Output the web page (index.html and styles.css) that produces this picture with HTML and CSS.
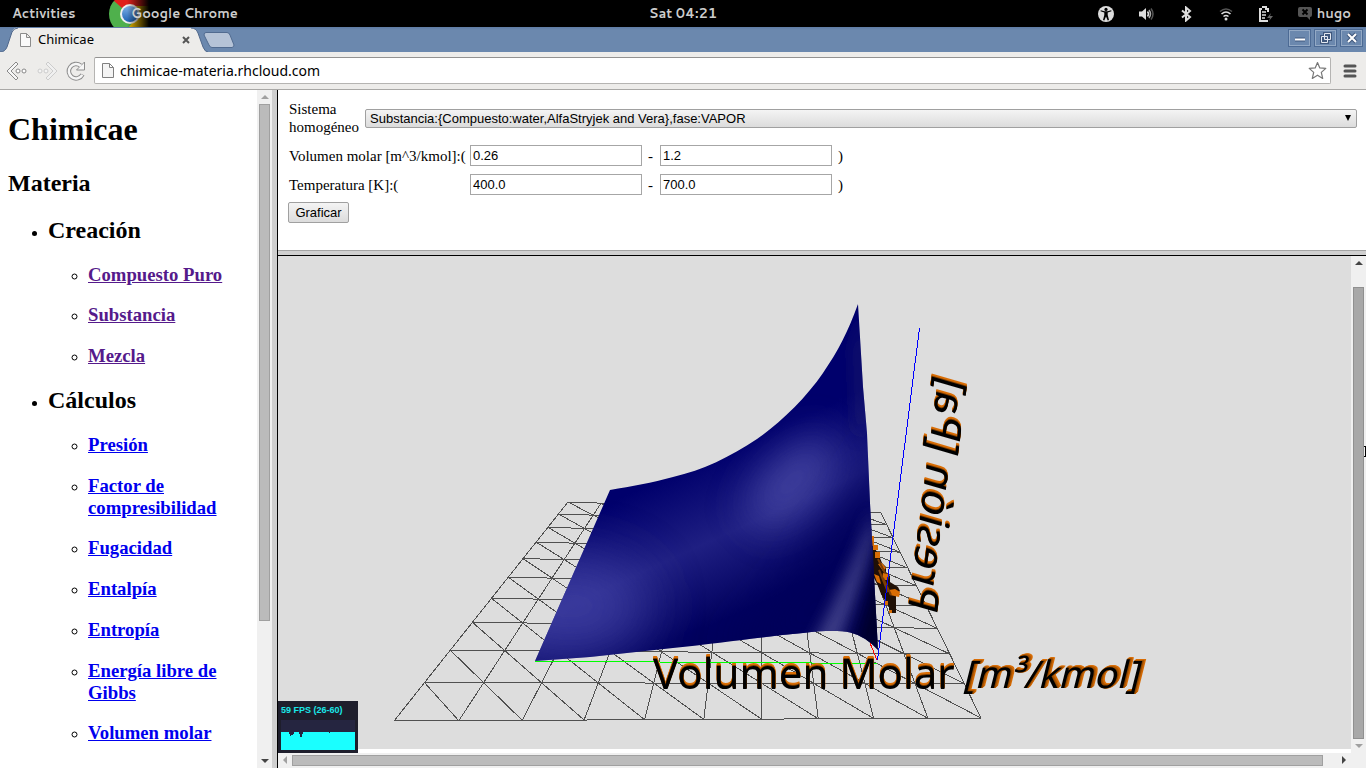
FILE: index.html
```html
<!DOCTYPE html>
<html lang="es">
<head>
<meta charset="utf-8">
<title>Chimicae</title>
<link rel="stylesheet" href="styles.css">
</head>
<body>
<header class="panel">
  <span class="panel-activities">Activities</span>
  <span class="panel-app">
    <svg class="chrome-logo" width="40" height="27" viewBox="0 0 40 27" aria-hidden="true">
      <defs>
        <linearGradient id="fade" x1="0" x2="1"><stop offset="0.45" stop-color="#000" stop-opacity="0"/><stop offset="1" stop-color="#000"/></linearGradient>
        <linearGradient id="lens" x1="0" x2="0" y1="0" y2="1"><stop offset="0" stop-color="#7fb0e8"/><stop offset="1" stop-color="#1f63b5"/></linearGradient>
      </defs>
      <circle cx="20" cy="14" r="20" fill="#4fb04c"/>
      <path d="M20 14 5 1 0 0H40V6H20z" fill="#e0201c"/>
      <path d="M20 6H40V27H20L28 17z" fill="#e8b800"/>
      <path d="M0 0H6L3 2 0 7z"/>
      <circle cx="21" cy="14" r="10" fill="#f0f0f0"/>
      <circle cx="21" cy="14" r="8" fill="url(#lens)"/>
      <rect width="40" height="27" fill="url(#fade)"/>
    </svg>
    <span class="panel-app-name">Google Chrome</span>
  </span>
  <time class="panel-clock">Sat 04:21</time>
  <div class="panel-status">
    <svg width="16" height="16" viewBox="0 0 16 16" aria-hidden="true"><circle cx="8" cy="8" r="8" fill="#ddd"/><circle cx="8" cy="3.4" r="1.6"/><path d="M2.5 5.2 6.3 6.4V9L5 14l1.3.4L8 10.5l1.7 3.9L11 14 9.700 9V6.400l3.800-1.200-.3-1L9.500 5.300h-3L2.800 4.200z"/></svg>
    <svg width="16" height="16" viewBox="0 0 16 16" aria-hidden="true"><path d="M1 5.500h3L8 2v12L4 10.500H1z" fill="#ddd"/><path d="M9.500 5.500q2 2.500 0 5" fill="none" stroke="#ddd" stroke-width="1.500"/><path d="M11 4q3 4 0 8" fill="none" stroke="#aaa" stroke-width="1.500"/><path d="M13 2.500q4 5.500 0 11" fill="none" stroke="#555" stroke-width="1.500"/></svg>
    <svg width="16" height="16" viewBox="0 0 16 16" aria-hidden="true"><path d="M4 4.500 12 11 8 14.500V1.500L12 5 4 11.500" fill="none" stroke="#ddd" stroke-width="2"/></svg>
    <svg width="16" height="16" viewBox="0 0 16 16" aria-hidden="true"><g fill="none" stroke-width="1.600"><path d="M2 5.500q6-5 12 0" stroke="#555"/><path d="M3.500 8q4.500-4 9 0" stroke="#ddd"/><path d="M5.500 10.500q2.500-2 5 0" stroke="#ddd"/></g><circle cx="8" cy="13" r="1.500" fill="#ddd"/></svg>
    <svg width="16" height="16" viewBox="0 0 16 16" aria-hidden="true"><path d="M4 1h4v2h2v3M10 15H2V3h2" fill="none" stroke="#ddd" stroke-width="2"/><path d="M4 6h4M4 9h4M4 12h3" stroke="#ddd" stroke-width="1.500"/><path d="M13 7 9 12h3l-1 3 4-5h-3z" fill="#666"/></svg>
    <span class="panel-user">
      <svg width="14" height="14" viewBox="0 0 14 14" aria-hidden="true"><path d="M2 0h10q2 0 2 2v6q0 2-2 2v3L9 10H2Q0 10 0 8V2Q0 0 2 0z" fill="#555"/><path d="m4.500 2.500 5 5m0-5-5 5" stroke="#000" stroke-width="2"/></svg>
      hugo
    </span>
  </div>
</header>

<div class="tabstrip">
  <div class="tab">
    <svg class="tab-shape" width="208" height="25" viewBox="0 0 208 25" aria-hidden="true"><path d="M0 25Q5 25 7 20L12 5Q14 0 18 1H191Q196 1 198 6L203 20Q205 25 208 25z" fill="#edecea"/><path d="M0 25Q5 25 7 20L12 5Q14 1 18 1M191 1Q196 1 198 6L203 20Q205 25 208 25" fill="none" stroke="#4f678b"/></svg>
    <svg class="tab-icon" width="11" height="14" viewBox="0 0 11 14" aria-hidden="true"><path d="M.5.500h6l4 4v9H.5zM6.500.500v4h4" fill="#fafafa" stroke="#8c8c8c"/></svg>
    <span class="tab-title">Chimicae</span>
    <button class="tab-close" aria-label="Cerrar"><svg width="8" height="8" viewBox="0 0 8 8"><path d="m1 1 6 6m0-6L1 7" stroke="#555" stroke-width="2"/></svg></button>
  </div>
  <button class="tab-new" aria-label="Nueva"><svg width="32" height="16" viewBox="0 0 32 16"><path d="M3 .5H24Q26 .5 27 3l4 10q0 2-2 2.500H9Q7 15.500 6 13L1 3Q1 .5 3 .5z" fill="#b5c3d7" stroke="#516b90"/></svg></button>
  <div class="window-buttons">
    <button aria-label="Minimizar"><svg width="12" height="12" viewBox="0 0 12 12"><path d="M1 7.500h10" stroke="#3f577c" stroke-width="4"/><path d="M1 7.500h10" stroke="#fff" stroke-width="2"/></svg></button>
    <button aria-label="Restaurar"><svg width="12" height="12" viewBox="0 0 12 12" fill="none"><path d="M4.500 1.500h6v6h-6zM1.500 4.500h6v6h-6z" stroke="#3f577c" stroke-width="3"/><path d="M4.500 1.500h6v6h-6zM1.500 4.500h6v6h-6z" stroke="#e4e9f1"/></svg></button>
    <button aria-label="Cerrar ventana"><svg width="12" height="12" viewBox="0 0 12 12"><path d="m2 2 8 8m0-8-8 8" stroke="#3f577c" stroke-width="4"/><path d="m2 2 8 8m0-8-8 8" stroke="#fff" stroke-width="2"/></svg></button>
  </div>
</div>

<nav class="toolbar">
  <button class="tool" aria-label="Atrás"><svg width="22" height="20" viewBox="0 0 22 20"><path d="M10 1 1 10l9 9 2-2-7-7 7-7z" fill="#f6f6f6" stroke="#888"/><circle cx="12" cy="10" r="2" fill="#fff" stroke="#888"/><circle cx="18" cy="10" r="2" fill="#fff" stroke="#888"/></svg></button>
  <button class="tool" aria-label="Adelante"><svg width="22" height="20" viewBox="0 0 22 20"><path d="m12 1 9 9-9 9-2-2 7-7-7-7z" fill="#f0f0f0" stroke="#ccc"/><circle cx="10" cy="10" r="2" fill="#f4f4f4" stroke="#ccc"/><circle cx="4" cy="10" r="2" fill="#f4f4f4" stroke="#ccc"/></svg></button>
  <button class="tool" aria-label="Recargar"><svg width="20" height="20" viewBox="0 0 20 20"><path d="M14.500 4.500A7.200 7.200 0 1 0 16.500 13.500" fill="none" stroke="#8d8d8d" stroke-width="4.500"/><path d="M18.500 1v8h-8z" fill="#f6f6f6" stroke="#8d8d8d"/><path d="M15 5A7.200 7.200 0 1 0 16.300 13.800" fill="none" stroke="#f6f6f6" stroke-width="2.500"/></svg></button>
  <div class="omnibox">
    <svg width="12" height="15" viewBox="0 0 12 15" aria-hidden="true"><path d="M.5.500h7l4 4v10H.5zM7.500.500v4h4" fill="#f4f4f4" stroke="#808080"/></svg>
    <input class="omnibox-url" type="text" aria-label="Dirección" value="chimicae-materia.rhcloud.com">
    <svg width="19" height="19" viewBox="0 0 19 19" aria-hidden="true"><path d="m9.500 1.500 2.300 5.400 6 .5-4.500 4 1.400 6-5.200-3.200-5.200 3.200 1.400-6-4.500-4 6-.5z" fill="#fff" stroke="#777" stroke-width="1.200" stroke-linejoin="round"/></svg>
  </div>
  <button class="menu" aria-label="Menú"><svg width="14" height="14" viewBox="0 0 14 14"><path d="M2 2h10M2 7h10M2 12h10" stroke="#555" stroke-width="3" stroke-linecap="round"/></svg></button>
</nav>

<div class="frames">
  <aside class="sidebar">
    <div class="sidebar-page">
      <h1>Chimicae</h1>
      <h2>Materia</h2>
      <ul>
        <li><h2>Creación</h2>
          <ul>
            <li><h3><a class="visited" href="#compuesto">Compuesto Puro</a></h3></li>
            <li><h3><a class="visited" href="#substancia">Substancia</a></h3></li>
            <li><h3><a class="visited" href="#mezcla">Mezcla</a></h3></li>
          </ul>
        </li>
        <li><h2>Cálculos</h2>
          <ul>
            <li><h3><a href="#presion">Presión</a></h3></li>
            <li><h3><a href="#factor">Factor de compresibilidad</a></h3></li>
            <li><h3><a href="#fugacidad">Fugacidad</a></h3></li>
            <li><h3><a href="#entalpia">Entalpía</a></h3></li>
            <li><h3><a href="#entropia">Entropía</a></h3></li>
            <li><h3><a href="#gibbs">Energía libre de Gibbs</a></h3></li>
            <li><h3><a href="#volumen">Volumen molar</a></h3></li>
          </ul>
        </li>
      </ul>
    </div>
    <div class="vscroll" aria-hidden="true">
      <span class="arrow arrow-up off"></span>
      <span class="track"><span class="thumb thumb-side"></span></span>
      <span class="arrow arrow-down"></span>
    </div>
  </aside>

  <main class="main">
    <form class="controls">
      <div class="system">
        <label for="sistema">Sistema homogéneo</label>
        <div class="select-box">
          <select id="sistema"><option>Substancia:{Compuesto:water,AlfaStryjek and Vera},fase:VAPOR</option></select>
        </div>
      </div>
      <div class="ranges">
        <label for="vol-min">Volumen molar [m^3/kmol]:(</label>
        <input id="vol-min" type="text" value="0.26"><span>-</span>
        <input aria-label="Volumen molar máximo" type="text" value="1.2"><span>)</span>
        <label for="temp-min">Temperatura [K]:(</label>
        <input id="temp-min" type="text" value="400.0"><span>-</span>
        <input aria-label="Temperatura máxima" type="text" value="700.0"><span>)</span>
      </div>
      <button class="submit" type="button">Graficar</button>
    </form>

    <section class="viewer">
      <div class="plot">
        <svg class="scene" viewBox="278 256 1073 493" preserveAspectRatio="xMidYMid slice">
          <defs>
            <clipPath id="sheet"><path d="M610 490C632 486 652 483 673 477C703 470 730 457 757 439C779 424 806 398 823 373C838 351 848 332 858 304L863 387 867 433 870 503 873 557 878 650Q865 636 850 632.500Q835 629 803 633C760 637 720 643 673 648L590 657 535 661z"/></clipPath>
            <linearGradient id="base" gradientUnits="userSpaceOnUse" x1="670" y1="475" x2="750" y2="650">
              <stop offset="0" stop-color="#00006c"/><stop offset=".4" stop-color="#1f1f82"/><stop offset=".8" stop-color="#00005e"/><stop offset="1" stop-color="#000058"/>
            </linearGradient>
            <filter id="soft" x="-80%" y="-80%" width="260%" height="260%"><feGaussianBlur stdDeviation="8"/></filter>
            <filter id="softer" x="-120%" y="-120%" width="340%" height="340%"><feGaussianBlur stdDeviation="20"/></filter>
            <filter id="softest" x="-120%" y="-120%" width="340%" height="340%"><feGaussianBlur stdDeviation="28"/></filter>
          </defs>
          <path id="grid" class="grid"/>
          <g class="edge-label">
            <path d="M871 538h3v9l3 5 3 6 2 5 4 4v5l4 4v6l8 5 2 4-4 4v18h-7v-6l-8-13-3-8-5-10-2-9z" fill="#201006"/>
            <path d="M871 536h3v10h-3zM873 545h5v5h-5zM875 552h5v6h-5zM878 564l4-1 4 5-3 3zM883 573l6 1-1 6h-6zM874 574l5 2 2 8-4-2zM889 590l6-1 5 3-1 5-9-2zM884 601h4v4h-4zM889 610h3v3h-3z" fill="#d96d05"/>
            <path d="M878 559l7 14M883 578l8 17M879 570l9 22" stroke="#7b3e06" stroke-width="2"/>
          </g>
          <g clip-path="url(#sheet)">
            <path d="M530 300H885V670H530z" fill="url(#base)"/>
            <ellipse cx="570" cy="606" rx="80" ry="50" fill="#4343a4" opacity=".8" filter="url(#softest)"/>
            <ellipse cx="792" cy="482" rx="56" ry="26" transform="rotate(-46 792 482)" fill="#4c4ca6" opacity=".85" filter="url(#softer)"/>
            <path d="M580 470Q770 450 846 290L800 280 580 430z" fill="#00006a" filter="url(#soft)"/>
            <path d="M890 430Q840 540 730 650H830L880 540z" fill="#00005a" filter="url(#softer)"/>
            <path d="M854 350L862 310 868 420 858 440z" fill="#24246c" opacity=".7" filter="url(#soft)"/>
            <path d="M874 510Q850 575 810 650H836Q862 580 874 540z" fill="#4a4a90" opacity=".9" filter="url(#soft)"/>
            <path d="M878 550Q872 590 852 650H890V540z" fill="#00002a" filter="url(#soft)"/>
          </g>
          <path d="M535 661.500H660M660 662.500H812M812 663.500H877" class="axis axis-x"/>
          <path d="M870 643 877 660" class="axis axis-z"/>
          <path d="M919.500 328 877.500 660" class="axis axis-y"/>
          <g class="extrude-up"><text x="653" y="689" class="label3d">Volumen Molar</text></g>
          <g class="extrude-side"><text transform="translate(962 688) skewX(-14)" class="label3d label3d-far">[m³/kmol]</text></g>
          <g class="extrude-up"><text transform="matrix(.13 -.99 -.96 -.28 908 608)" class="label3d">Presión [Pa]</text></g>
        </svg>
      </div>
      <div class="stats">
        <span class="stats-text">59 FPS (26-60)</span>
        <svg class="stats-graph" width="74" height="30" viewBox="0 0 74 30" aria-hidden="true"><path d="M0 0h74v30H0z" fill="#252540"/><path d="M0 12H8V14H9V16H10V15H12V14H13V12H18V14H19V17H21V14H22V12H48V13H49V12H74V30H0z" fill="#1affff"/></svg>
      </div>
      <div class="vscroll" aria-hidden="true">
        <span class="arrow arrow-up"></span>
        <span class="track"><span class="thumb thumb-view"></span></span>
        <span class="arrow arrow-down off"></span>
      </div>
      <div class="hscroll" aria-hidden="true">
        <span class="arrow arrow-left off"></span>
        <span class="track"><span class="thumb thumb-bottom"></span></span>
        <span class="arrow arrow-right"></span>
      </div>
      <div class="corner"></div>
    </section>
  </main>
</div>
<svg class="cursor" width="2" height="11" viewBox="0 0 2 11" aria-hidden="true"><path d="M2 0H0v1h1v9H0v1h2z"/></svg>
<script src="scene.js"></script>
</body>
</html>
```

FILE: styles.css
```css
* { box-sizing: border-box; }
html, body { height: 100%; }
body {
  margin: 0;
  display: flex;
  flex-direction: column;
  overflow: hidden;
  background: #fff;
  font-family: "Liberation Serif", serif;
}
button { padding: 0; border: 0; background: none; font: inherit; }
svg { display: block; flex: none; }

/* desktop panel */
.panel {
  height: 27px;
  flex: none;
  display: grid;
  grid-template-columns: 1fr auto 1fr;
  align-items: center;
  padding: 0 12px;
  background: #000;
  color: #ccc;
  font: 700 13px/27px Cantarell, "Noto Sans", sans-serif;
}
.panel-activities { grid-area: 1 / 1; }
.panel-app { grid-area: 1 / 1; display: flex; margin-left: 97px; }
.panel-app-name { margin-left: -18px; position: relative; }
.panel-clock { grid-area: 1 / 2; }
.panel-status { grid-area: 1 / 3; display: flex; justify-content: flex-end; align-items: center; gap: 24px; }
.panel-user { display: flex; align-items: center; gap: 5px; }
.panel-status { padding-right: 3px; }

/* tabs */
.tabstrip {
  height: 25px;
  flex: none;
  display: flex;
  background: linear-gradient(#5f7ca5, #6b88ae 3px);
  font: 13px/25px "Noto Sans", sans-serif;
  color: #000;
}
.tab { position: relative; width: 208px; display: flex; align-items: center; padding: 0 18px 0 20px; }
.tab-shape { position: absolute; left: 0; top: 0; }
.tab-icon, .tab-title, .tab-close { position: relative; }
.tab-title { margin-left: 7px; flex: 1; }
.tab-new { align-self: center; margin-left: -5px; }
.window-buttons { margin-left: auto; display: flex; gap: 3px; padding: 2px 3px 5px; }
.window-buttons button {
  width: 23px;
  height: 18px;
  display: grid;
  place-items: center;
  border: 1px solid #4c6a94;
  box-shadow: inset 0 0 0 1px #93a9c5;
}

/* toolbar */
.toolbar {
  height: 38px;
  flex: none;
  display: flex;
  align-items: center;
  gap: 8px;
  padding: 0 9px 0 6px;
  background: #edecea;
  border-bottom: 1px solid #a9a8a6;
}
.omnibox {
  flex: 1;
  height: 27px;
  display: flex;
  align-items: center;
  padding: 0 3px 0 7px;
  border: 1px solid #b5b4b2;
  border-top-color: #939291;
  border-radius: 2px;
  background: #fff;
}
.omnibox-url {
  flex: 1;
  border: 0;
  padding: 0 0 0 6px;
  outline: 0;
  background: none;
  font: 14px/20px "Noto Sans", sans-serif;
  color: #000;
}
.menu { margin-left: 4px; }

/* frameset */
.frames { flex: 1; min-height: 0; display: flex; }
.sidebar {
  width: 278px;
  flex: none;
  display: flex;
  border-right: 1px solid #000;
  box-shadow: inset -5px 0 #cfcfcf, inset -6px 0 #a4a4a4;
  padding-right: 5px;
}
.sidebar-page { flex: 1; padding: 0 8px; overflow: hidden; }
a { color: #00e; }
a.visited { color: #551a8b; }
.main { flex: 1; min-width: 0; display: flex; flex-direction: column; }

/* scrollbars */
.vscroll, .hscroll { display: flex; background: #f0f0f0; }
.vscroll { width: 15px; flex: none; flex-direction: column; }
.hscroll { height: 15px; }
.track { flex: 1; display: flex; flex-direction: inherit; padding: 0 2px; }
.hscroll .track { padding: 2px 0; }
.thumb { background: #bbb; border: 1px solid #a0a0a0; }
.arrow { width: 15px; height: 14px; display: grid; place-items: center; }
.arrow::before { content: ""; border: 4px solid transparent; color: #444; }
.arrow.off::before { color: #a0a0a0; }
.arrow-up::before { border-top: 0; border-bottom-color: currentColor; }
.arrow-down::before { border-bottom: 0; border-top-color: currentColor; }
.arrow-left { width: 14px; }
.arrow-left::before { border-left: 0; border-right-color: currentColor; }
.arrow-right::before { border-right: 0; border-left-color: currentColor; }
.thumb-side { width: 11px; height: 79.5%; }
.thumb-view { width: 11px; margin-top: 17px; flex: 1; background: #a8a8a8; border-color: #909090; }
.thumb-bottom { flex: 1; margin-right: 13px; }

/* controls */
.controls {
  height: 166px;
  flex: none;
  padding: 10px 9px 0 11px;
  border-bottom: 1px solid #000;
  box-shadow: inset 0 -4px #d0d0d0, inset 0 -5px #a4a4a4;
  font-size: 15px;
  line-height: 18px;
}
.system { display: flex; align-items: center; gap: 6px; }
.system label { width: 70px; }
.select-box { flex: 1; position: relative; }
.select-box::after {
  content: "";
  position: absolute;
  right: 6px;
  top: 6px;
  border: 3px solid transparent;
  border-top: 6px solid #000;
  border-bottom: 0;
  pointer-events: none;
}
select, .controls input, .submit { font: 13px/15px "Liberation Sans", sans-serif; color: #000; }
select {
  appearance: none;
  display: block;
  width: 100%;
  height: 19px;
  padding: 0 4px;
  border: 1px solid #a0a0a0;
  border-radius: 2px;
  background: linear-gradient(#f4f4f4, #dcdcdc);
}
.ranges {
  display: grid;
  grid-template-columns: 175px 172px 6px 172px 6px;
  gap: 8px 6px;
  align-items: center;
  margin-top: 9px;
}
.ranges label { white-space: nowrap; }
.controls input { width: 100%; height: 21px; padding: 1px 2px; border: 1px solid #a6a6a6; border-radius: 0; }
.submit {
  width: 61px;
  height: 21px;
  margin: 7px 0 0 -1px;
  border: 1px solid #a0a0a0;
  border-radius: 2px;
  background: linear-gradient(#f4f4f4, #dcdcdc);
}

/* viewer */
.viewer {
  position: relative;
  flex: 1;
  min-height: 0;
  display: grid;
  grid-template: minmax(0, 1fr) 15px / minmax(0, 1fr) 15px;
}
.plot { padding-bottom: 4px; }
.scene { width: 100%; height: 100%; background: #ddd; }
.corner { background: #f0f0f0; }
.grid { fill: none; stroke: #505050; shape-rendering: crispEdges; }
.axis { fill: none; shape-rendering: crispEdges; }
.axis-x { stroke: #0f0; }
.axis-y { stroke: #00f; }
.axis-z { stroke: #f00; }
.label3d { font: 42px "Noto Sans", sans-serif; fill: #000; }
.label3d-far { font-size: 38px; }
.extrude-up {
  filter: drop-shadow(0 -1px 0 #7a3d00) drop-shadow(0 -1px 0 #d96d05) drop-shadow(0 -1px 0 #d96d05);
}
.extrude-side {
  filter: drop-shadow(1px 0 0 #8a4500) drop-shadow(1px -1px 0 #a85400) drop-shadow(1px 0 0 #c86405) drop-shadow(1px -1px 0 #d96d05);
}
.stats {
  position: absolute;
  left: 0;
  bottom: 15px;
  width: 80px;
  padding: 3px;
  background: #1e1e2c;
}
.stats-text {
  display: block;
  font: 700 9px/13px "Liberation Sans", sans-serif;
  color: #1ae8e8;
  white-space: nowrap;
  margin-bottom: 3px;
}
.cursor { position: absolute; right: 0; top: 446px; }
```

FILE: scene.js
```js
// Ground grid: a 10 x 10 plane seen in perspective, each cell split by a diagonal.
(function () {
  var p00 = [394, 721], p10 = [981, 718], p11 = [881, 513], p01 = [568, 502];
  var n = 10;
  var dx1 = p10[0] - p11[0], dx2 = p01[0] - p11[0], dx3 = p00[0] - p10[0] + p11[0] - p01[0];
  var dy1 = p10[1] - p11[1], dy2 = p01[1] - p11[1], dy3 = p00[1] - p10[1] + p11[1] - p01[1];
  var det = dx1 * dy2 - dx2 * dy1;
  var g = (dx3 * dy2 - dx2 * dy3) / det;
  var h = (dx1 * dy3 - dx3 * dy1) / det;

  function project(i, j) {
    var u = i / n, v = j / n, w = g * u + h * v + 1;
    return [0, 1].map(function (k) {
      var a = p10[k] - p00[k] + g * p10[k];
      var b = p01[k] - p00[k] + h * p01[k];
      return ((a * u + b * v + p00[k]) / w).toFixed(1);
    }).join(" ");
  }

  var d = "";
  function line(i1, j1, i2, j2) {
    d += "M" + project(i1, j1) + "L" + project(i2, j2);
  }
  for (var i = 0; i <= n; i++) {
    line(i, 0, i, n);
    line(0, i, n, i);
  }
  for (var k = 1; k <= n; k++) {
    line(0, k, k, 0);
    if (k < n) line(k, n, n, k);
  }
  document.getElementById("grid").setAttribute("d", d);
})();
```
